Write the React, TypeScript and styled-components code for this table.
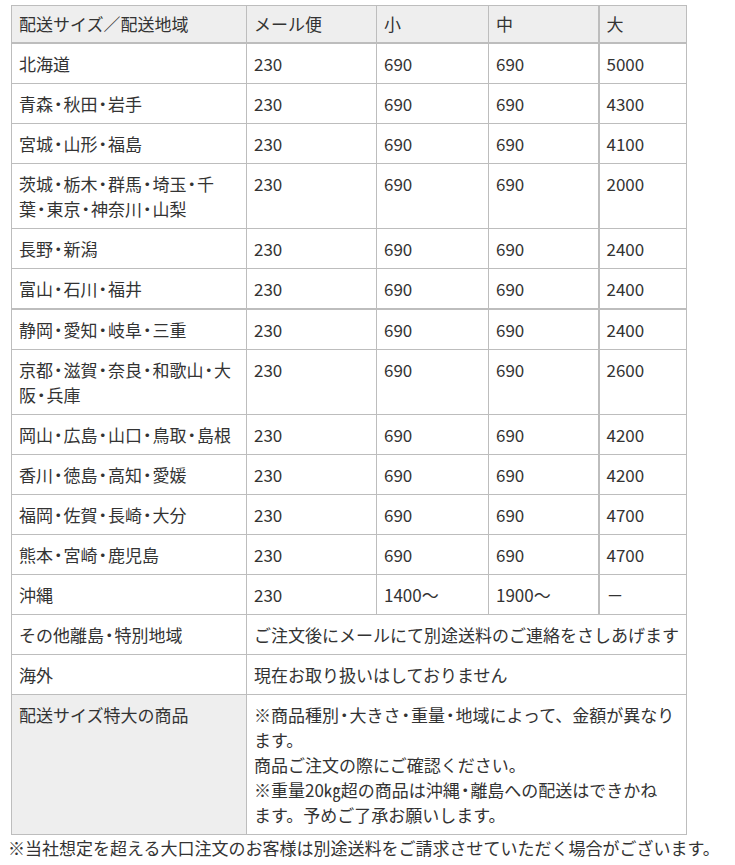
import React from 'react';
import styled, { createGlobalStyle } from 'styled-components';

// == styles =======================================================================================
const GlobalStyle = createGlobalStyle`
  body {
    margin: 0;
    background: #fff;
    font-family: 'Noto Sans CJK JP', 'Noto Sans', sans-serif;
    color: #333;
  }
`;

const Root = styled.div`
  padding: 5px 0 0 0;
  width: 735px;
`;

const Table = styled.table`
  margin-left: 11px;
  width: 675px;
  table-layout: fixed;
  border-collapse: collapse;
  font-size: 17px;
  line-height: 25px;
`;

const Cell = styled.td<{ $head?: boolean; $thickTop?: boolean; $thickLeft?: boolean }>`
  padding: 7px 7px 7px;
  vertical-align: top;
  text-align: left;
  font-weight: normal;
  white-space: nowrap;
  border: 1px solid #bdbdbd;
  border-top-width: ${ ( p ) => p.$thickTop ? '2px' : '1px' };
  border-left-width: ${ ( p ) => p.$thickLeft ? '2px' : '1px' };
  background: ${ ( p ) => p.$head ? '#eeeeee' : '#fff' };
`;

const HeadCell = styled( Cell ).attrs( { as: 'th' } )`
  padding: 5px 7px 6px;
  border-bottom-width: 2px;
`;

// half-width middle dot, as the original font draws it
const Dot = styled.span`
  font-feature-settings: "halt";
  margin: 0 1px;
`;

const Footer = styled.div`
  padding-left: 8px;
  font-size: 17px;
  line-height: 25px;
  white-space: nowrap;
`;

// == data =========================================================================================
interface Row {
  area: string[];
  mail: string;
  small: string;
  middle: string;
  large: string;
  thickTop?: boolean;
}

const rows: Row[] = [
  { area: [ '北海道' ], mail: '230', small: '690', middle: '690', large: '5000' },
  { area: [ '青森・秋田・岩手' ], mail: '230', small: '690', middle: '690', large: '4300' },
  { area: [ '宮城・山形・福島' ], mail: '230', small: '690', middle: '690', large: '4100' },
  { area: [ '茨城・栃木・群馬・埼玉・千', '葉・東京・神奈川・山梨' ], mail: '230', small: '690', middle: '690', large: '2000' },
  { area: [ '長野・新潟' ], mail: '230', small: '690', middle: '690', large: '2400' },
  { area: [ '富山・石川・福井' ], mail: '230', small: '690', middle: '690', large: '2400' },
  { area: [ '静岡・愛知・岐阜・三重' ], mail: '230', small: '690', middle: '690', large: '2400', thickTop: true },
  { area: [ '京都・滋賀・奈良・和歌山・大', '阪・兵庫' ], mail: '230', small: '690', middle: '690', large: '2600' },
  { area: [ '岡山・広島・山口・鳥取・島根' ], mail: '230', small: '690', middle: '690', large: '4200' },
  { area: [ '香川・徳島・高知・愛媛' ], mail: '230', small: '690', middle: '690', large: '4200' },
  { area: [ '福岡・佐賀・長崎・大分' ], mail: '230', small: '690', middle: '690', large: '4700' },
  { area: [ '熊本・宮崎・鹿児島' ], mail: '230', small: '690', middle: '690', large: '4700' },
  { area: [ '沖縄' ], mail: '230', small: '1400～', middle: '1900～', large: '－' },
];

const noteLines = [
  '※商品種別・大きさ・重量・地域によって、金額が異なり',
  'ます。',
  '商品ご注文の際にご確認ください。',
  '※重量20㎏超の商品は沖縄・離島への配送はできかね',
  'ます。予めご了承お願いします。',
];

const withDots = ( text: string ) => {
  const parts = text.split( '・' );
  return parts.map( ( part, i ) => (
    <React.Fragment key={ i }>
      { i > 0 && <Dot>・</Dot> }
      { part }
    </React.Fragment>
  ) );
};

const lines = ( list: string[] ) => list.map( ( line, i ) => (
  <React.Fragment key={ i }>
    { i > 0 && <br /> }
    { withDots( line ) }
  </React.Fragment>
) );

// == element ======================================================================================
export default function App() {
  return <>
    <GlobalStyle />
    <Root>
      <Table>
        <colgroup>
          <col style={ { width: 235 } } />
          <col style={ { width: 130 } } />
          <col style={ { width: 112 } } />
          <col style={ { width: 110 } } />
          <col style={ { width: 88 } } />
        </colgroup>
        <thead>
          <tr>
            <HeadCell $head>配送サイズ／配送地域</HeadCell>
            <HeadCell $head>メール便</HeadCell>
            <HeadCell $head>小</HeadCell>
            <HeadCell $head>中</HeadCell>
            <HeadCell $head $thickLeft>大</HeadCell>
          </tr>
        </thead>
        <tbody>
          { rows.map( ( row, i ) => (
            <tr key={ i }>
              <Cell $thickTop={ row.thickTop }>{ lines( row.area ) }</Cell>
              <Cell $thickTop={ row.thickTop }>{ row.mail }</Cell>
              <Cell $thickTop={ row.thickTop }>{ row.small }</Cell>
              <Cell $thickTop={ row.thickTop }>{ row.middle }</Cell>
              <Cell $thickTop={ row.thickTop } $thickLeft>{ row.large }</Cell>
            </tr>
          ) ) }
          <tr>
            <Cell>{ withDots( 'その他離島・特別地域' ) }</Cell>
            <Cell colSpan={ 4 }>ご注文後にメールにて別途送料のご連絡をさしあげます</Cell>
          </tr>
          <tr>
            <Cell>海外</Cell>
            <Cell colSpan={ 4 }>現在お取り扱いはしておりません</Cell>
          </tr>
          <tr>
            <Cell $head>配送サイズ特大の商品</Cell>
            <Cell colSpan={ 4 }>{ lines( noteLines ) }</Cell>
          </tr>
        </tbody>
      </Table>
      <Footer>※当社想定を超える大口注文のお客様は別途送料をご請求させていただく場合がございます。</Footer>
    </Root>
  </>;
}
